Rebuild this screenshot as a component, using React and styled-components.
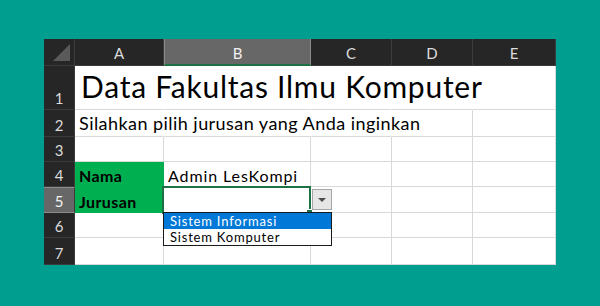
import React from 'react'
import styled, { createGlobalStyle } from 'styled-components';

const GlobalStyle = createGlobalStyle`
    html, body {
        margin: 0;
        padding: 0;
        background-color: #009e8e;
    }
    body {
        font-family: Lato, "Open Sans", sans-serif;
    }
`;

const Page = styled.div`
    width: 600px;
    height: 306px;
    box-sizing: border-box;
    padding-top: 39px;
    display: flex;
    justify-content: center;
    align-items: flex-start;
    overflow: hidden;
`;

const Sheet = styled.div`
    display: grid;
    grid-template-columns: 31px 89px 147px 81px 81px 83px;
    grid-template-rows: 27px 44px 27px 25px 25px 26px 25px 27px;
    background-color: white;
`;

const Corner = styled.div`
    background-color: #262626;
    border-right: 1px solid #3b3b3b;
    border-bottom: 1px solid #3b3b3b;
    box-sizing: border-box;
    display: flex;
    align-items: flex-end;
    justify-content: flex-end;
    padding: 0 4px 4px 0;
`;

const Triangle = styled.div`
    width: 0;
    height: 0;
    border-left: 17px solid transparent;
    border-bottom: 17px solid #5a5a5a;
`;

const ColHeader = styled.div`
    background-color: ${p => p.$active ? '#676767' : '#262626'};
    color: ${p => p.$active ? '#f2f2f2' : '#dcdcdc'};
    border-right: 1px solid ${p => p.$active ? '#8c8c8c' : '#3b3b3b'};
    border-left: ${p => p.$active ? '1px solid #8c8c8c' : 'none'};
    border-bottom: ${p => p.$active ? '2px solid #1e7145' : '1px solid #3b3b3b'};
    box-sizing: border-box;
    display: flex;
    align-items: center;
    justify-content: center;
    font-size: 15px;
    padding-top: 2px;
`;

const RowHeader = styled.div`
    background-color: ${p => p.$active ? '#676767' : '#262626'};
    color: ${p => p.$active ? '#f2f2f2' : '#dcdcdc'};
    border-bottom: 1px solid ${p => p.$active ? '#8c8c8c' : '#3b3b3b'};
    border-top: ${p => p.$active ? '1px solid #8c8c8c' : 'none'};
    border-right: 1px solid #3b3b3b;
    box-sizing: border-box;
    display: flex;
    align-items: flex-end;
    justify-content: center;
    font-size: 15px;
    padding-bottom: 2px;
`;

const Cell = styled.div`
    position: relative;
    box-sizing: border-box;
    background-color: ${p => p.$fill || 'transparent'};
    border-right: 1px solid ${p => p.$fill || (p.$noRight ? 'transparent' : '#d9d9d9')};
    border-bottom: 1px solid ${p => p.$fill || '#d9d9d9'};
    display: flex;
    align-items: flex-end;
    padding: 0 0 ${p => p.$pb ?? 2}px ${p => p.$pl ?? 4}px;
    white-space: nowrap;
    color: #000;
    font-size: ${p => p.$size || 16}px;
    font-weight: ${p => p.$bold ? 700 : 400};
    letter-spacing: ${p => p.$ls ?? 0.9}px;
`;

const CellText = styled.span`
    line-height: 1;
`;

const Selection = styled.div`
    position: absolute;
    left: -2px;
    top: -1px;
    right: -1px;
    bottom: -2px;
    border: 2px solid #1e7145;
    pointer-events: none;
`;

const FillHandle = styled.div`
    position: absolute;
    right: -4px;
    bottom: -4px;
    width: 5px;
    height: 5px;
    background-color: #1e7145;
    border: 1px solid white;
`;

const DropButton = styled.div`
    position: absolute;
    left: calc(100% + 2px);
    top: 2px;
    width: 20px;
    height: 21px;
    box-sizing: border-box;
    background-color: #e6e6e6;
    border: 1px solid #a6a6a6;
    display: flex;
    align-items: center;
    justify-content: center;
`;

const Arrow = styled.div`
    width: 0;
    height: 0;
    border-left: 4px solid transparent;
    border-right: 4px solid transparent;
    border-top: 4px solid #4d4d4d;
    margin-top: 1px;
`;

const DropList = styled.div`
    position: absolute;
    left: -1px;
    top: 100%;
    width: 169px;
    box-sizing: border-box;
    background-color: white;
    border: 1px solid #1a1a1a;
    z-index: 2;
    letter-spacing: 0.8px;
`;

const DropItem = styled.div`
    height: 16px;
    line-height: 16px;
    padding-left: 6px;
    font-size: 13px;
    color: ${p => p.$selected ? 'white' : '#000'};
    background-color: ${p => p.$selected ? '#0078d7' : 'white'};
`;

const columns = ['A', 'B', 'C', 'D', 'E'];

const App = () => {
    return (
        <>
            <GlobalStyle />
            <Page>
                <Sheet>
                    <Corner><Triangle /></Corner>
                    {columns.map(c => (
                        <ColHeader key={c} $active={c === 'B'}>{c}</ColHeader>
                    ))}

                    <RowHeader>1</RowHeader>
                    <Cell $noRight $size={30} $pb={8} $pl={6} $ls={0.75}><CellText>Data Fakultas Ilmu Komputer</CellText></Cell>
                    <Cell $noRight />
                    <Cell $noRight />
                    <Cell $noRight />
                    <Cell />

                    <RowHeader>2</RowHeader>
                    <Cell $noRight $size={18} $pb={4} $ls={0.45}><CellText>Silahkan pilih jurusan yang Anda inginkan</CellText></Cell>
                    <Cell $noRight />
                    <Cell $noRight />
                    <Cell />
                    <Cell />

                    <RowHeader>3</RowHeader>
                    <Cell />
                    <Cell />
                    <Cell />
                    <Cell />
                    <Cell />

                    <RowHeader>4</RowHeader>
                    <Cell $fill="#00b050" $bold $ls={0.4}><CellText>Nama</CellText></Cell>
                    <Cell><CellText>Admin LesKompi</CellText></Cell>
                    <Cell />
                    <Cell />
                    <Cell />

                    <RowHeader $active>5</RowHeader>
                    <Cell $fill="#00b050" $bold $ls={0.4}><CellText>Jurusan</CellText></Cell>
                    <Cell>
                        <Selection><FillHandle /></Selection>
                        <DropButton><Arrow /></DropButton>
                        <DropList>
                            <DropItem $selected>Sistem Informasi</DropItem>
                            <DropItem>Sistem Komputer</DropItem>
                        </DropList>
                    </Cell>
                    <Cell />
                    <Cell />
                    <Cell />

                    <RowHeader>6</RowHeader>
                    <Cell />
                    <Cell />
                    <Cell />
                    <Cell />
                    <Cell />

                    <RowHeader>7</RowHeader>
                    <Cell />
                    <Cell />
                    <Cell />
                    <Cell />
                    <Cell />
                </Sheet>
            </Page>
        </>
    )
}

export default App
